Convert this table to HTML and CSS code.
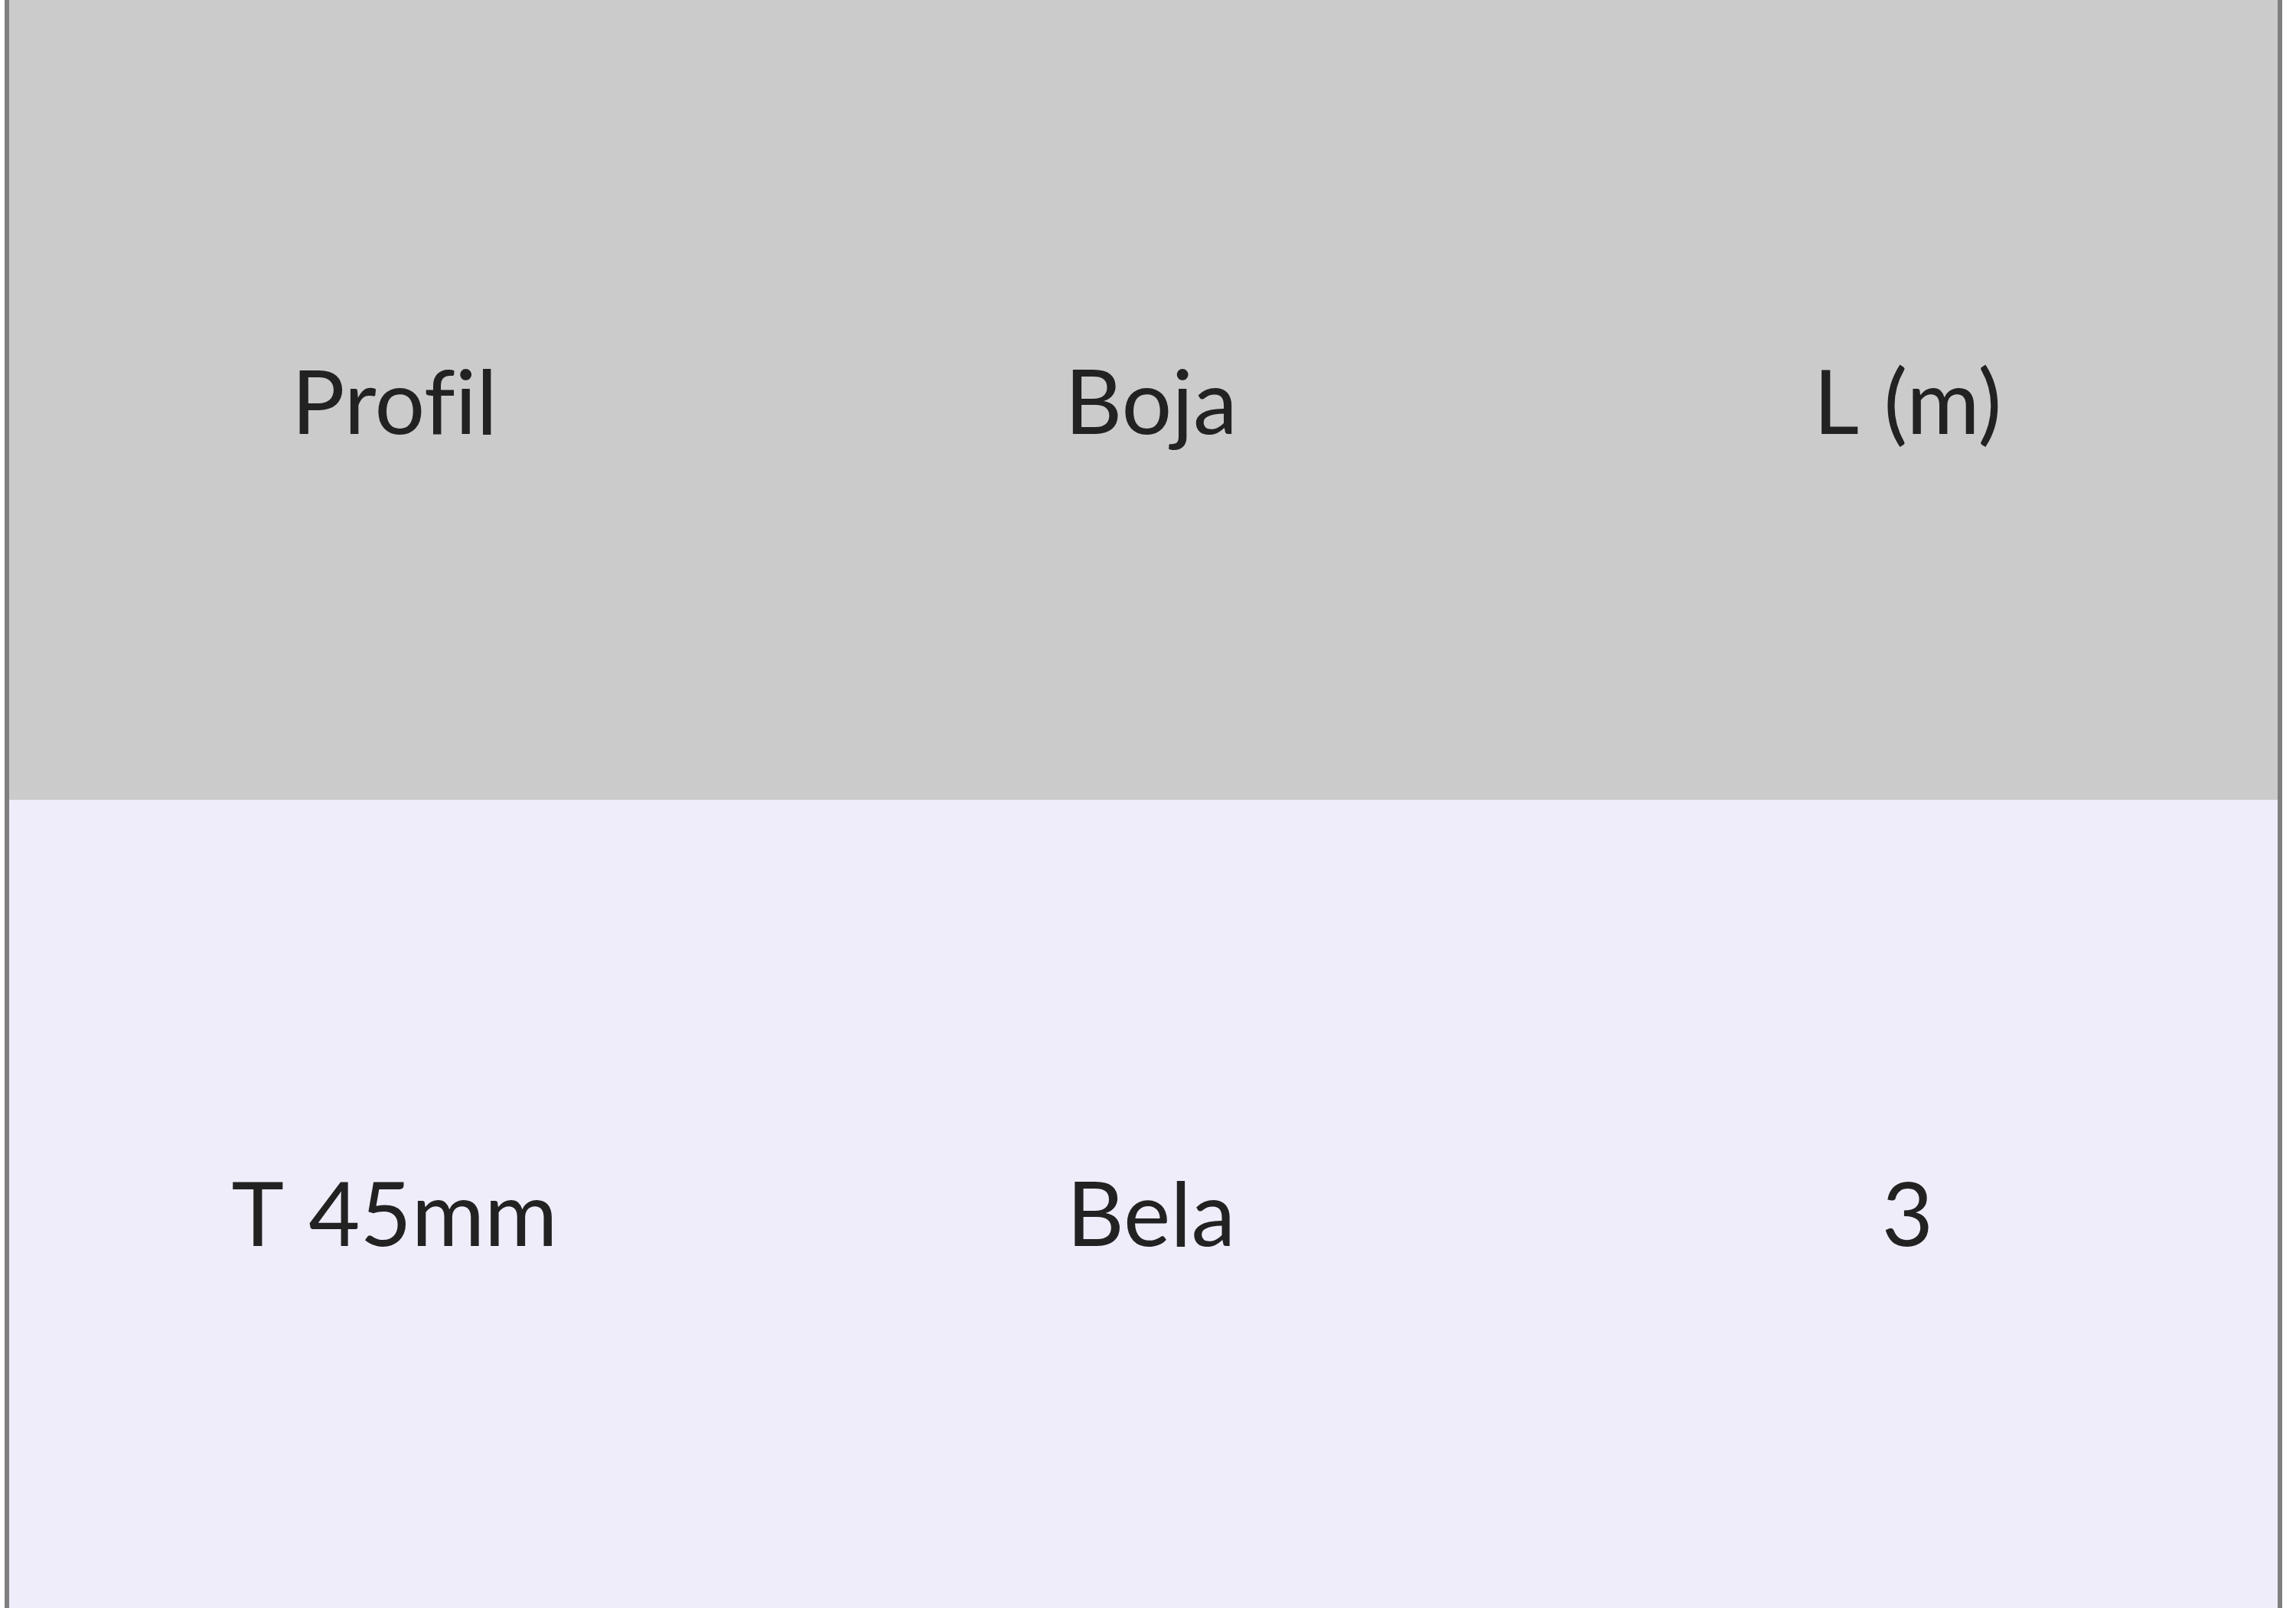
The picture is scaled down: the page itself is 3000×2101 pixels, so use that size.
FILE: index.html
```html
<!DOCTYPE html>
<html lang="sr">
<head>
<meta charset="utf-8">
<title>Profil</title>
<link rel="stylesheet" href="styles.css">
</head>
<body>
<table class="grid">
  <thead>
    <tr class="head-row">
      <th>Profil</th>
      <th>Boja</th>
      <th>L (m)</th>
    </tr>
  </thead>
  <tbody>
    <tr class="body-row">
      <td>T 45mm</td>
      <td>Bela</td>
      <td>3</td>
    </tr>
  </tbody>
</table>
</body>
</html>
```

FILE: styles.css
```css
html, body {
  margin: 0;
  padding: 0;
  background: #ffffff;
}

.grid {
  margin-left: 6px;
  width: 2976px;
  border-collapse: collapse;
  border-left: 6px solid #7f7f7f;
  border-right: 6px solid #7f7f7f;
  table-layout: fixed;
  font-family: "Lato", "Open Sans", sans-serif;
  font-size: 116px;
  font-variant-ligatures: none;
  word-spacing: 6px;
  color: #222222;
}

.grid th,
.grid td {
  padding: 0 0 0 20px;
  text-align: center;
  font-weight: 400;
}

.head-row {
  background: #cbcbcb;
  height: 1045px;
}

.body-row {
  background: #f0edfb;
  height: 1076px;
}
```
